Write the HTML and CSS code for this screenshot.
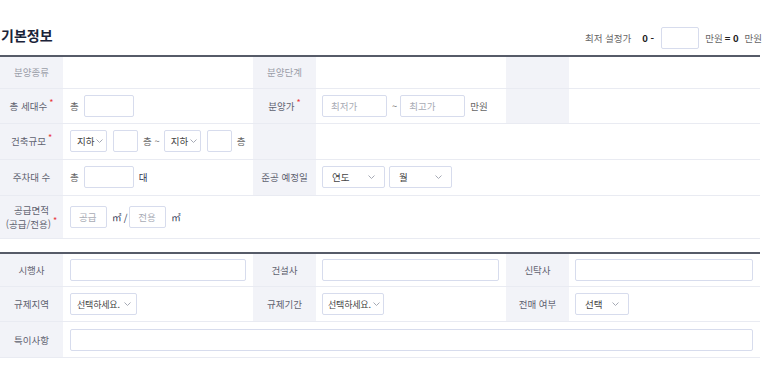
FILE: index.html
```html
<!DOCTYPE html>
<html lang="ko">
<head>
  <meta charset="UTF-8">
  <title>기본정보</title>
  <meta name="viewport" content="width=device-width, initial-scale=1.0">
  <link rel="stylesheet" href="styles.css">
</head>
<body>

  <div class="page">
    <div class="section-head">
      <h2>기본정보</h2>
      <div class="min-price">
        <span class="min-label">최저 설정가</span>
        <b>0 -</b>
        <input type="text" class="box w38">
        <span>만원</span><b class="eq">= 0</b><span>만원</span>
      </div>
    </div>

    <table class="info-table">
      <colgroup>
        <col class="c-label"><col class="c-value"><col class="c-label"><col class="c-value"><col class="c-label"><col class="c-value-last">
      </colgroup>
      <tr class="r32">
        <th class="muted">분양종류</th>
        <td></td>
        <th class="muted">분양단계</th>
        <td></td>
        <th></th>
        <td></td>
      </tr>
      <tr class="r35">
        <th>총 세대수<span class="req">*</span></th>
        <td>
          <div class="field">
            <span class="unit">총</span>
            <input type="text" class="box w50">
          </div>
        </td>
        <th>분양가<span class="req">*</span></th>
        <td>
          <div class="field">
            <input type="text" class="box w65" placeholder="최저가">
            <span class="unit tilde">~</span>
            <input type="text" class="box w65" placeholder="최고가">
            <span class="unit">만원</span>
          </div>
        </td>
        <th></th>
        <td></td>
      </tr>
      <tr class="r36">
        <th>건축규모<span class="req">*</span></th>
        <td>
          <div class="field">
            <div class="sel w37">지하<svg width="7" height="4" viewBox="0 0 7 4"><polyline points="0.5,0.5 3.5,3.5 6.5,0.5"/></svg></div>
            <input type="text" class="box w25">
            <span class="unit">층 ~</span>
            <div class="sel w37">지하<svg width="7" height="4" viewBox="0 0 7 4"><polyline points="0.5,0.5 3.5,3.5 6.5,0.5"/></svg></div>
            <input type="text" class="box w25">
            <span class="unit">층</span>
          </div>
        </td>
        <th></th>
        <td colspan="3"></td>
      </tr>
      <tr class="r36">
        <th>주차대 수</th>
        <td>
          <div class="field">
            <span class="unit">총</span>
            <input type="text" class="box w50">
            <span class="unit dark">대</span>
          </div>
        </td>
        <th>준공 예정일</th>
        <td colspan="3">
          <div class="field">
            <div class="sel w63 wide">연도<svg width="7" height="4" viewBox="0 0 7 4"><polyline points="0.5,0.5 3.5,3.5 6.5,0.5"/></svg></div>
            <div class="sel w63 wide">월<svg width="7" height="4" viewBox="0 0 7 4"><polyline points="0.5,0.5 3.5,3.5 6.5,0.5"/></svg></div>
          </div>
        </td>
      </tr>
      <tr class="r43">
        <th>공급면적<br>(공급/전용)<span class="req">*</span></th>
        <td colspan="5">
          <div class="field">
            <input type="text" class="box w37" placeholder="공급">
            <span class="unit dark slash">㎡ /</span>
            <input type="text" class="box w37" placeholder="전용">
            <span class="unit dark">㎡</span>
          </div>
        </td>
      </tr>
    </table>

    <table class="info-table second">
      <colgroup>
        <col class="c-label"><col class="c-value"><col class="c-label"><col class="c-value"><col class="c-label"><col class="c-value-last">
      </colgroup>
      <tr class="r34">
        <th>시행사</th>
        <td><input type="text" class="box full"></td>
        <th>건설사</th>
        <td><input type="text" class="box full"></td>
        <th>신탁사</th>
        <td><input type="text" class="box full"></td>
      </tr>
      <tr class="r35">
        <th>규제지역</th>
        <td><div class="sel w67 small">선택하세요.<svg width="7" height="4" viewBox="0 0 7 4"><polyline points="0.5,0.5 3.5,3.5 6.5,0.5"/></svg></div></td>
        <th>규제기간</th>
        <td><div class="sel w62 small tight">선택하세요.<svg width="7" height="4" viewBox="0 0 7 4"><polyline points="0.5,0.5 3.5,3.5 6.5,0.5"/></svg></div></td>
        <th>전매 여부</th>
        <td><div class="sel w54 wide">선택<svg width="7" height="4" viewBox="0 0 7 4"><polyline points="0.5,0.5 3.5,3.5 6.5,0.5"/></svg></div></td>
      </tr>
      <tr class="r36">
        <th>특이사항</th>
        <td colspan="5"><input type="text" class="box full"></td>
      </tr>
    </table>
  </div>

</body>
</html>
```

FILE: styles.css
```css
* {
  box-sizing: border-box;
}

body {
  margin: 0;
  font-family: "Noto Sans CJK KR", "Noto Sans", sans-serif;
  background: #ffffff;
  color: #555;
}

.page {
  width: 760px;
}

.section-head {
  display: flex;
  justify-content: space-between;
  align-items: center;
  height: 22px;
  margin-top: 27px;
  margin-bottom: 6px;
}

h2 {
  margin: 0 0 0 1px;
  align-self: flex-start;
  font-size: 14px;
  line-height: 17px;
  font-weight: 700;
  color: #1b2339;
}

.min-price {
  display: flex;
  align-items: center;
  font-size: 9.5px;
  color: #666;
  margin-right: -2px;
}

.min-price .min-label {
  margin-right: 11px;
}

.min-price b {
  color: #222;
  margin-right: 7px;
}

.min-price input {
  margin-right: 6px;
}

.min-price b.eq {
  margin-left: 2px;
  margin-right: 6px;
}

.info-table {
  width: 760px;
  border-collapse: collapse;
  table-layout: fixed;
  border-top: 2px solid #565b68;
}

.info-table.second {
  margin-top: 13px;
}

.c-label {
  width: 63px;
}

.c-value {
  width: 190px;
}

.c-value-last {
  width: 191px;
}

th {
  background: #f2f3f8;
  font-weight: 400;
  font-size: 9.5px;
  line-height: 14px;
  color: #5f6270;
  text-align: center;
  padding: 0;
  border-bottom: 1px solid #e9ebf2;
}

th.muted {
  color: #9a9da8;
}

td {
  padding: 0 7px 0 6px;
  border-bottom: 1px solid #e9ebf2;
  font-size: 9.5px;
  white-space: nowrap;
}

td:nth-child(2) {
  padding-left: 7px;
}

.r32 { height: 32px; }
.r34 { height: 34px; }
.r35 { height: 35px; }
.r36 { height: 36px; }
.r43 { height: 43px; }

.req {
  color: #e8383d;
  font-size: 9px;
  vertical-align: top;
  margin-left: 2px;
  position: relative;
  top: -3px;
}

.field {
  display: flex;
  align-items: center;
}

.unit {
  color: #666;
  margin: 0 4px 0 5px;
}

.field > .unit:first-child {
  margin: 0 5px 0 0;
}

.unit.tilde {
  margin: 0 3px 0 5px;
}

.unit.slash {
  margin: 0 2px 0 5px;
}

.unit.dark {
  color: #333a55;
}

.box {
  height: 22px;
  border: 1px solid #d7dced;
  border-radius: 2px;
  background: #fff;
  padding: 0 8px;
  font-family: inherit;
  font-size: 9.5px;
  color: #333;
  vertical-align: middle;
  outline: none;
}

.box::placeholder {
  color: #a8abb5;
}

.full { width: 100%; }
.w25 { width: 25px; }
.w37 { width: 37px; }
.w38 { width: 38px; }
.w50 { width: 50px; }
.w54 { width: 54px; }
.w62 { width: 62px; }
.w63 { width: 63px; }
.w65 { width: 65px; }
.w67 { width: 67px; }

.sel {
  display: inline-flex;
  flex-shrink: 0;
  align-items: center;
  justify-content: space-between;
  height: 22px;
  padding: 0 5px 0 6px;
  border: 1px solid #d7dced;
  border-radius: 2px;
  background: #fff;
  color: #444;
  font-size: 9.5px;
  vertical-align: middle;
}

.sel.wide {
  padding: 0 9px 0 9px;
}

.sel.small {
  font-size: 9px;
  letter-spacing: -0.2px;
}

.sel.tight {
  padding: 0 3px 0 5px;
}

.sel svg {
  flex-shrink: 0;
  fill: none;
  stroke: #a6aab5;
  stroke-width: 1;
  margin-left: 2px;
}

.sel + .box {
  margin-left: 6px;
}

.unit + .sel {
  margin-left: 0;
}

.sel + .sel {
  margin-left: 4px;
}
```
